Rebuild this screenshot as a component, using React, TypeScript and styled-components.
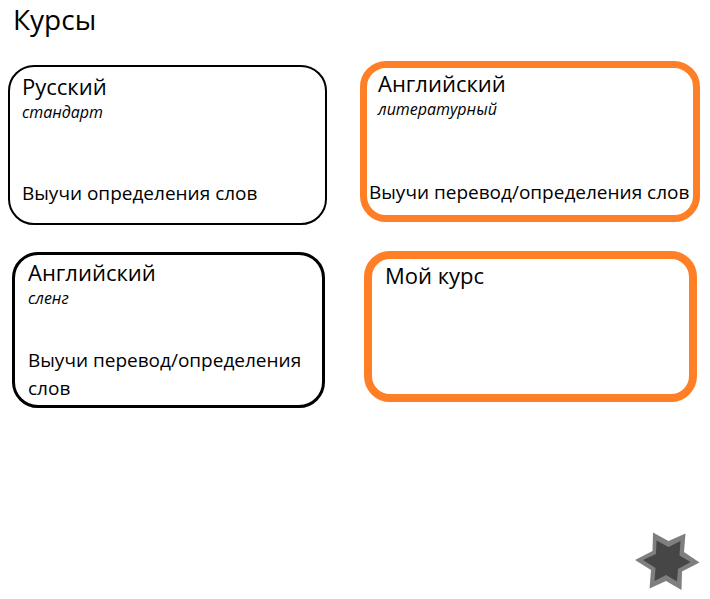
import React from 'react';
import styled, { createGlobalStyle } from 'styled-components';

const GlobalStyle = createGlobalStyle`
  * { box-sizing: border-box; }
  body {
    margin: 0;
    background: #fff;
    color: #000;
    font-family: 'Segoe UI', 'Open Sans', 'Noto Sans', sans-serif;
  }
`;

const Page = styled.main`
  display: flex;
  flex-direction: column;
  min-height: 100vh;
`;

const PageTitle = styled.h1`
  margin: 0;
  padding: 0 13px 23px;
  font-size: 28px;
  font-weight: 400;
  line-height: 38px;
`;

const CourseRow = styled.section<{ $inset: string; $columns: string; $gap: number }>`
  display: grid;
  grid-template-columns: ${({ $columns }) => $columns};
  align-items: start;
  column-gap: ${({ $gap }) => $gap}px;
  padding: ${({ $inset }) => $inset};
  & + & { margin-top: 26px; }
`;

type CardProps = { $border: number; $height: number; $top?: number; $padding: string; $accent?: boolean };

const CourseCard = styled.button<CardProps>`
  display: flex;
  flex-direction: column;
  align-items: stretch;
  min-width: 0;
  min-height: ${({ $height }) => $height}px;
  margin: ${({ $top = 0 }) => $top}px 0 0;
  padding: ${({ $padding }) => $padding};
  border: ${({ $border }) => $border}px solid ${({ $accent }) => ($accent ? '#ff7f27' : '#000')};
  border-radius: 26px;
  background: #fff;
  color: inherit;
  font: inherit;
  text-align: left;
  cursor: pointer;
`;

const CourseHead = styled.span<{ $indent?: number }>`
  display: flex;
  flex-direction: column;
  padding-left: ${({ $indent = 0 }) => $indent}px;
`;

const CourseName = styled.span`
  font-size: 22px;
  line-height: 28px;
`;

const CourseKind = styled.em`
  font-size: 16px;
  line-height: 24px;
`;

const CourseTask = styled.span`
  margin-top: auto;
  font-size: 19px;
  line-height: 28px;
`;

const SettingsButton = styled.button`
  align-self: flex-end;
  margin: auto 10px 8px 0;
  padding: 0;
  border: 0;
  background: none;
  cursor: pointer;
  svg { display: block; }
`;

export default function App() {
  return (
    <>
      <GlobalStyle />
      <Page>
        <PageTitle>Курсы</PageTitle>
        <CourseRow $inset="0 10px 0 8px" $columns="319fr 340fr" $gap={33}>
          <CourseCard type="button" $border={2} $height={160} $top={4} $padding="5px 12px 16px">
            <CourseHead>
              <CourseName>Русский</CourseName>
              <CourseKind>стандарт</CourseKind>
            </CourseHead>
            <CourseTask>Выучи определения слов</CourseTask>
          </CourseCard>
          <CourseCard type="button" $accent $border={7} $height={161} $padding="1px 0 9px 2px">
            <CourseHead $indent={9}>
              <CourseName>Английский</CourseName>
              <CourseKind>литературный</CourseKind>
            </CourseHead>
            <CourseTask>Выучи перевод/определения слов</CourseTask>
          </CourseCard>
        </CourseRow>
        <CourseRow $inset="0 13px 0 12px" $columns="313fr 333fr" $gap={39}>
          <CourseCard type="button" $border={3} $height={156} $top={1} $padding="3px 13px">
            <CourseHead>
              <CourseName>Английский</CourseName>
              <CourseKind>сленг</CourseKind>
            </CourseHead>
            <CourseTask>Выучи перевод/определения слов</CourseTask>
          </CourseCard>
          <CourseCard type="button" $accent $border={8} $height={151} $padding="2px 13px">
            <CourseName>Мой курс</CourseName>
          </CourseCard>
        </CourseRow>
        <SettingsButton type="button" aria-label="Настройки">
          <svg width="66" height="60" viewBox="0 0 66 60" aria-hidden="true">
            <path
              d="M19 1.5L34.5 10L51.5 2.5L50 21L65.5 31.5L48 40.5L47.5 59L32 50L15.5 57.5L17 39L1 29L18.5 20Z"
              fill="#7f7f7f"
            />
            <path
              d="M22.5 9.5L34.5 16L46.5 10L45.5 24.5L56.5 31L44 38L43 50.5L32 44L20.5 50L21.5 37L9 29L22 23Z"
              fill="#464646"
            />
          </svg>
        </SettingsButton>
      </Page>
    </>
  );
}
